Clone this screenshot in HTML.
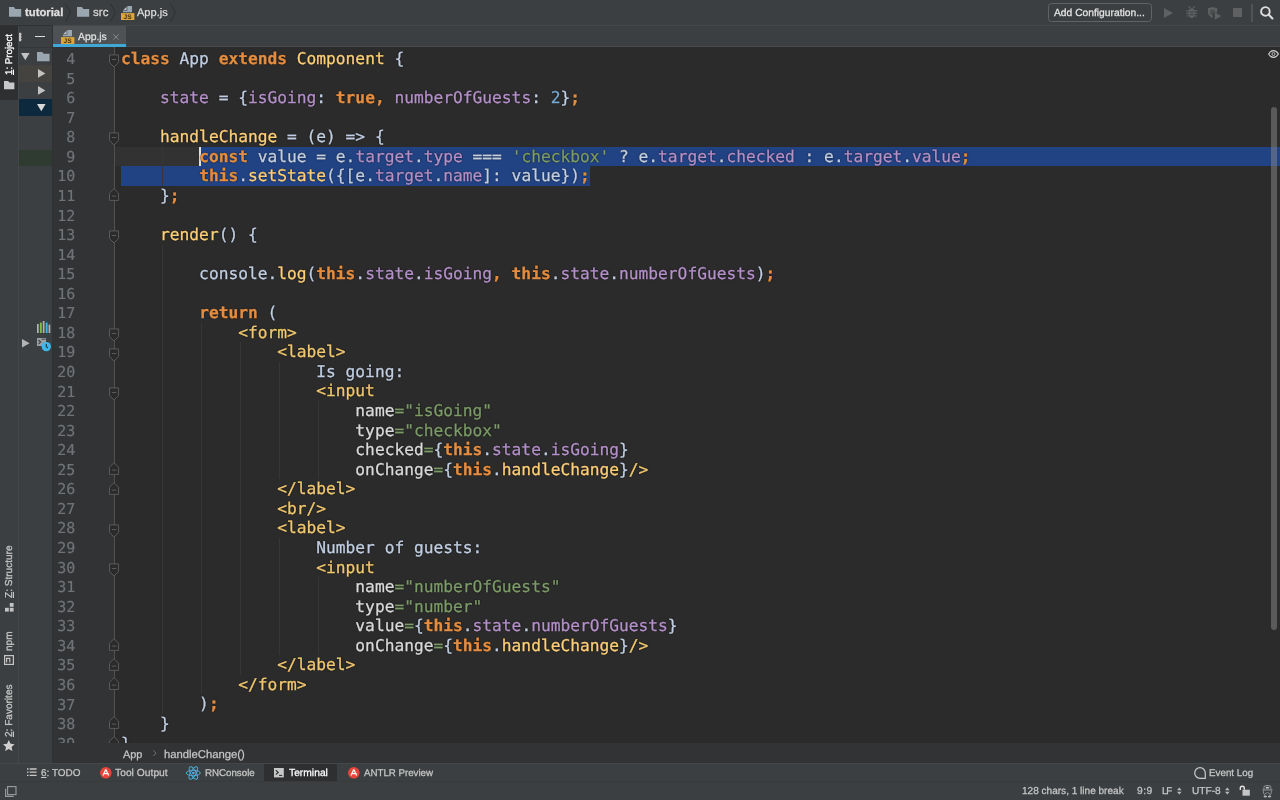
<!DOCTYPE html>
<html lang="en"><head><meta charset="utf-8"><title>App.js - tutorial</title>
<style>
*{box-sizing:border-box;margin:0;padding:0}
html,body{text-rendering:geometricPrecision;width:1280px;height:800px;overflow:hidden;background:#3c3f41;font-family:"Liberation Sans",sans-serif;color:#bbb;font-size:11px}
#app{position:relative;width:1280px;height:800px;overflow:hidden;background:#3c3f41}
.abs{position:absolute}
#editor{position:absolute;left:53px;top:47px;width:1227px;height:696px;background:#2b2b2b;overflow:hidden}
#gutter{position:absolute;left:0;top:0;width:61px;height:696px;background:#313335}
.ln{will-change:transform;-webkit-text-stroke:0.2px currentColor;position:absolute;left:0;width:22.4px;text-align:right;color:#6f7377;font:15px/19.56px "DejaVu Sans Mono","Liberation Mono",monospace;white-space:pre;height:19.56px}
.cl{text-shadow:0 0 1.5px rgba(0,0,0,.95),0 0 1px rgba(0,0,0,.5);will-change:transform;-webkit-text-stroke:0.3px currentColor;position:absolute;left:67.8px;color:#c2cfe3;font:16.235px/19.56px "DejaVu Sans Mono","Liberation Mono",monospace;white-space:pre;height:19.56px}
.k{color:#e48d40;font-weight:bold}
.p{color:#b591ca}
.f{color:#ffd07a}
.t{color:#f2c970}
.s{color:#7d9c69}
.n{color:#7aaad0}
.a{color:#dadada}
.guide{position:absolute;width:1px;background:#363636}
.ui{will-change:transform;-webkit-text-stroke:0.25px currentColor;position:absolute;white-space:nowrap;line-height:16px;height:16px}
u{text-decoration:underline;text-underline-offset:0.5px}
.vt{will-change:transform;-webkit-text-stroke:0.25px currentColor;position:absolute;white-space:nowrap;transform-origin:0 0;transform:rotate(-90deg);line-height:16px;height:16px}
svg{position:absolute;overflow:visible}
</style></head><body><div id="app">

<div id="editor">
<div id="gutter"></div>
<div class="abs" style="left:61px;top:99.75px;width:1166px;height:19.56px;background:#323232"></div>
<div class="abs" style="left:147.00px;top:99.75px;width:1100px;height:19.56px;background:#214283"></div>
<div class="abs" style="left:68.00px;top:119.31px;width:469.00px;height:19.56px;background:#214283"></div>
<div class="guide" style="left:109.0px;top:99.75px;height:39.12px"></div>
<div class="guide" style="left:109.0px;top:197.55px;height:469.44px"></div>
<div class="guide" style="left:148.0px;top:275.79px;height:371.64px"></div>
<div class="guide" style="left:187.0px;top:295.35px;height:332.52px"></div>
<div class="guide" style="left:226.0px;top:314.91px;height:117.36px"></div>
<div class="guide" style="left:226.0px;top:490.95px;height:117.36px"></div>
<div class="guide" style="left:265.0px;top:354.03px;height:78.24px"></div>
<div class="guide" style="left:265.0px;top:530.07px;height:78.24px"></div>
<div class="abs" style="left:60.9px;top:0;width:1px;height:696px;background:#515151"></div>
<div class="abs" style="left:146.2px;top:99.75px;width:1.4px;height:19.56px;background:#e0e0e0"></div>
<div class="ln" style="top:3.05px">4</div>
<div class="cl" style="top:1.95px"><span class="k">class</span> App <span class="k">extends</span> <span class="f">Component</span> {</div>
<div class="ln" style="top:22.61px">5</div>
<div class="ln" style="top:42.17px">6</div>
<div class="cl" style="top:41.07px">    <span class="p">state</span> = {<span class="p">isGoing</span>: <span class="k">true</span><span class="k">,</span> <span class="p">numberOfGuests</span>: <span class="n">2</span>}<span class="k">;</span></div>
<div class="ln" style="top:61.73px">7</div>
<div class="ln" style="top:81.29px">8</div>
<div class="cl" style="top:80.19px">    <span class="f">handleChange</span> = (e) =&gt; {</div>
<div class="ln" style="top:100.85px">9</div>
<div class="cl" style="top:99.75px">        <span class="k">const</span> value = e.<span class="p">target</span>.<span class="p">type</span> === <span class="s">'checkbox'</span> ? e.<span class="p">target</span>.<span class="p">checked</span> : e.<span class="p">target</span>.<span class="p">value</span><span class="k">;</span></div>
<div class="ln" style="top:120.41px">10</div>
<div class="cl" style="top:119.31px">        <span class="k">this</span>.<span class="f">setState</span>({[e.<span class="p">target</span>.<span class="p">name</span>]: value})<span class="k">;</span></div>
<div class="ln" style="top:139.97px">11</div>
<div class="cl" style="top:138.87px">    }<span class="k">;</span></div>
<div class="ln" style="top:159.53px">12</div>
<div class="ln" style="top:179.09px">13</div>
<div class="cl" style="top:177.99px">    <span class="f">render</span>() {</div>
<div class="ln" style="top:198.65px">14</div>
<div class="ln" style="top:218.21px">15</div>
<div class="cl" style="top:217.11px">        console.<span class="f">log</span>(<span class="k">this</span>.<span class="p">state</span>.<span class="p">isGoing</span><span class="k">,</span> <span class="k">this</span>.<span class="p">state</span>.<span class="p">numberOfGuests</span>)<span class="k">;</span></div>
<div class="ln" style="top:237.77px">16</div>
<div class="ln" style="top:257.33px">17</div>
<div class="cl" style="top:256.23px">        <span class="k">return</span> (</div>
<div class="ln" style="top:276.89px">18</div>
<div class="cl" style="top:275.79px">            <span class="t">&lt;form&gt;</span></div>
<div class="ln" style="top:296.45px">19</div>
<div class="cl" style="top:295.35px">                <span class="t">&lt;label&gt;</span></div>
<div class="ln" style="top:316.01px">20</div>
<div class="cl" style="top:314.91px">                    Is going:</div>
<div class="ln" style="top:335.57px">21</div>
<div class="cl" style="top:334.47px">                    <span class="t">&lt;input</span></div>
<div class="ln" style="top:355.13px">22</div>
<div class="cl" style="top:354.03px">                        <span class="a">name</span><span class="s">="isGoing"</span></div>
<div class="ln" style="top:374.69px">23</div>
<div class="cl" style="top:373.59px">                        <span class="a">type</span><span class="s">="checkbox"</span></div>
<div class="ln" style="top:394.25px">24</div>
<div class="cl" style="top:393.15px">                        <span class="a">checked</span><span class="s">=</span>{<span class="k">this</span>.<span class="p">state</span>.<span class="p">isGoing</span>}</div>
<div class="ln" style="top:413.81px">25</div>
<div class="cl" style="top:412.71px">                        <span class="a">onChange</span><span class="s">=</span>{<span class="k">this</span>.<span class="f">handleChange</span>}<span class="t">/&gt;</span></div>
<div class="ln" style="top:433.37px">26</div>
<div class="cl" style="top:432.27px">                <span class="t">&lt;/label&gt;</span></div>
<div class="ln" style="top:452.93px">27</div>
<div class="cl" style="top:451.83px">                <span class="t">&lt;br/&gt;</span></div>
<div class="ln" style="top:472.49px">28</div>
<div class="cl" style="top:471.39px">                <span class="t">&lt;label&gt;</span></div>
<div class="ln" style="top:492.05px">29</div>
<div class="cl" style="top:490.95px">                    Number of guests:</div>
<div class="ln" style="top:511.61px">30</div>
<div class="cl" style="top:510.51px">                    <span class="t">&lt;input</span></div>
<div class="ln" style="top:531.17px">31</div>
<div class="cl" style="top:530.07px">                        <span class="a">name</span><span class="s">="numberOfGuests"</span></div>
<div class="ln" style="top:550.73px">32</div>
<div class="cl" style="top:549.63px">                        <span class="a">type</span><span class="s">="number"</span></div>
<div class="ln" style="top:570.29px">33</div>
<div class="cl" style="top:569.19px">                        <span class="a">value</span><span class="s">=</span>{<span class="k">this</span>.<span class="p">state</span>.<span class="p">numberOfGuests</span>}</div>
<div class="ln" style="top:589.85px">34</div>
<div class="cl" style="top:588.75px">                        <span class="a">onChange</span><span class="s">=</span>{<span class="k">this</span>.<span class="f">handleChange</span>}<span class="t">/&gt;</span></div>
<div class="ln" style="top:609.41px">35</div>
<div class="cl" style="top:608.31px">                <span class="t">&lt;/label&gt;</span></div>
<div class="ln" style="top:628.97px">36</div>
<div class="cl" style="top:627.87px">            <span class="t">&lt;/form&gt;</span></div>
<div class="ln" style="top:648.53px">37</div>
<div class="cl" style="top:647.43px">        )<span class="k">;</span></div>
<div class="ln" style="top:668.09px">38</div>
<div class="cl" style="top:666.99px">    }</div>
<div class="ln" style="top:687.65px">39</div>
<div class="cl" style="top:686.55px">}</div>
<svg style="left:56px;top:2.25px" width="10" height="20" viewBox="0 0 10 20"><path d="M0.5 5.9h9.1v7.6l-4.55 4.5-4.55-4.5z" fill="#2b2b2b" stroke="#5a5a5a" stroke-width="1"/><path d="M2.8 10.5h4.5" stroke="#5a5a5a" stroke-width="1"/></svg>
<svg style="left:56px;top:80.49px" width="10" height="20" viewBox="0 0 10 20"><path d="M0.5 5.9h9.1v7.6l-4.55 4.5-4.55-4.5z" fill="#2b2b2b" stroke="#5a5a5a" stroke-width="1"/><path d="M2.8 10.5h4.5" stroke="#5a5a5a" stroke-width="1"/></svg>
<svg style="left:56px;top:178.29px" width="10" height="20" viewBox="0 0 10 20"><path d="M0.5 5.9h9.1v7.6l-4.55 4.5-4.55-4.5z" fill="#2b2b2b" stroke="#5a5a5a" stroke-width="1"/><path d="M2.8 10.5h4.5" stroke="#5a5a5a" stroke-width="1"/></svg>
<svg style="left:56px;top:276.09px" width="10" height="20" viewBox="0 0 10 20"><path d="M0.5 5.9h9.1v7.6l-4.55 4.5-4.55-4.5z" fill="#2b2b2b" stroke="#5a5a5a" stroke-width="1"/><path d="M2.8 10.5h4.5" stroke="#5a5a5a" stroke-width="1"/></svg>
<svg style="left:56px;top:295.65px" width="10" height="20" viewBox="0 0 10 20"><path d="M0.5 5.9h9.1v7.6l-4.55 4.5-4.55-4.5z" fill="#2b2b2b" stroke="#5a5a5a" stroke-width="1"/><path d="M2.8 10.5h4.5" stroke="#5a5a5a" stroke-width="1"/></svg>
<svg style="left:56px;top:334.77px" width="10" height="20" viewBox="0 0 10 20"><path d="M0.5 5.9h9.1v7.6l-4.55 4.5-4.55-4.5z" fill="#2b2b2b" stroke="#5a5a5a" stroke-width="1"/><path d="M2.8 10.5h4.5" stroke="#5a5a5a" stroke-width="1"/></svg>
<svg style="left:56px;top:471.69px" width="10" height="20" viewBox="0 0 10 20"><path d="M0.5 5.9h9.1v7.6l-4.55 4.5-4.55-4.5z" fill="#2b2b2b" stroke="#5a5a5a" stroke-width="1"/><path d="M2.8 10.5h4.5" stroke="#5a5a5a" stroke-width="1"/></svg>
<svg style="left:56px;top:510.81px" width="10" height="20" viewBox="0 0 10 20"><path d="M0.5 5.9h9.1v7.6l-4.55 4.5-4.55-4.5z" fill="#2b2b2b" stroke="#5a5a5a" stroke-width="1"/><path d="M2.8 10.5h4.5" stroke="#5a5a5a" stroke-width="1"/></svg>
<svg style="left:56px;top:139.17px" width="10" height="20" viewBox="0 0 10 20"><path d="M0.5 14.4h9.1v-7.2l-4.55-4.5-4.55 4.5z" fill="#2b2b2b" stroke="#5a5a5a" stroke-width="1"/><path d="M2.8 10.1h4.5" stroke="#5a5a5a" stroke-width="1"/></svg>
<svg style="left:56px;top:413.01px" width="10" height="20" viewBox="0 0 10 20"><path d="M0.5 14.4h9.1v-7.2l-4.55-4.5-4.55 4.5z" fill="#2b2b2b" stroke="#5a5a5a" stroke-width="1"/><path d="M2.8 10.1h4.5" stroke="#5a5a5a" stroke-width="1"/></svg>
<svg style="left:56px;top:432.57px" width="10" height="20" viewBox="0 0 10 20"><path d="M0.5 14.4h9.1v-7.2l-4.55-4.5-4.55 4.5z" fill="#2b2b2b" stroke="#5a5a5a" stroke-width="1"/><path d="M2.8 10.1h4.5" stroke="#5a5a5a" stroke-width="1"/></svg>
<svg style="left:56px;top:589.05px" width="10" height="20" viewBox="0 0 10 20"><path d="M0.5 14.4h9.1v-7.2l-4.55-4.5-4.55 4.5z" fill="#2b2b2b" stroke="#5a5a5a" stroke-width="1"/><path d="M2.8 10.1h4.5" stroke="#5a5a5a" stroke-width="1"/></svg>
<svg style="left:56px;top:608.61px" width="10" height="20" viewBox="0 0 10 20"><path d="M0.5 14.4h9.1v-7.2l-4.55-4.5-4.55 4.5z" fill="#2b2b2b" stroke="#5a5a5a" stroke-width="1"/><path d="M2.8 10.1h4.5" stroke="#5a5a5a" stroke-width="1"/></svg>
<svg style="left:56px;top:628.17px" width="10" height="20" viewBox="0 0 10 20"><path d="M0.5 14.4h9.1v-7.2l-4.55-4.5-4.55 4.5z" fill="#2b2b2b" stroke="#5a5a5a" stroke-width="1"/><path d="M2.8 10.1h4.5" stroke="#5a5a5a" stroke-width="1"/></svg>
<svg style="left:56px;top:667.29px" width="10" height="20" viewBox="0 0 10 20"><path d="M0.5 14.4h9.1v-7.2l-4.55-4.5-4.55 4.5z" fill="#2b2b2b" stroke="#5a5a5a" stroke-width="1"/><path d="M2.8 10.1h4.5" stroke="#5a5a5a" stroke-width="1"/></svg>
<svg style="left:56px;top:686.85px" width="10" height="20" viewBox="0 0 10 20"><path d="M0.5 14.4h9.1v-7.2l-4.55-4.5-4.55 4.5z" fill="#2b2b2b" stroke="#5a5a5a" stroke-width="1"/><path d="M2.8 10.1h4.5" stroke="#5a5a5a" stroke-width="1"/></svg>
<div class="abs" style="left:1217.8px;top:60px;width:6.5px;height:523px;border-radius:3.3px;background:rgba(139,139,139,.49)"></div>
<svg style="left:1215.3px;top:2.6px" width="11" height="8" viewBox="0 0 11 8"><path d="M0.6 4C2 1.6 3.6 0.6 5.5 0.6S9 1.6 10.4 4C9 6.4 7.4 7.4 5.5 7.4S2 6.4 0.6 4z" fill="none" stroke="#cfcfcf" stroke-width="1.15"/><circle cx="5.5" cy="4" r="1.5" fill="none" stroke="#bdbdbd" stroke-width="1"/></svg>
</div>
<div class="abs" style="left:0px;top:0px;width:1280px;height:25px;background:#3c3f41"></div>
<div class="abs" style="left:0px;top:25px;width:53px;height:1px;background:#303234"></div>
<div class="abs" style="left:53px;top:25px;width:1227px;height:1px;background:#464849"></div>
<div class="abs" style="left:53px;top:26px;width:1227px;height:20px;background:#3c3f41"></div>
<div class="abs" style="left:53px;top:46px;width:1227px;height:1px;background:#4a4b4c"></div>
<div class="abs" style="left:53px;top:26px;width:73.2px;height:19px;background:#4e5254"></div>
<div class="abs" style="left:53px;top:44.2px;width:73.2px;height:2.8px;background:#40a8d4"></div>
<div class="abs" style="left:0px;top:26px;width:18px;height:737px;background:#3c3f41"></div>
<div class="abs" style="left:0px;top:26px;width:18px;height:73.5px;background:#2d2f30"></div>
<div class="abs" style="left:18px;top:26px;width:1px;height:737px;background:#444648"></div>
<div class="abs" style="left:19px;top:26px;width:33.6px;height:737px;background:#3c3f41"></div>
<div class="abs" style="left:19px;top:46.6px;width:33.4px;height:0.9px;background:#343638"></div>
<div class="abs" style="left:19px;top:65px;width:34px;height:17px;background:#45433f"></div>
<div class="abs" style="left:19px;top:99px;width:34px;height:16.7px;background:#0d293e"></div>
<div class="abs" style="left:19px;top:149.5px;width:34px;height:16.5px;background:#2f3b30"></div>
<div class="abs" style="left:52.4px;top:26px;width:0.8px;height:737px;background:#2f3133"></div>
<div class="abs" style="left:53px;top:743px;width:1227px;height:20px;background:#313335"></div>
<div class="abs" style="left:0px;top:763px;width:1280px;height:19px;background:#3c3f41"></div>
<div class="abs" style="left:0px;top:763px;width:1280px;height:1px;background:#444648"></div>
<div class="abs" style="left:264.3px;top:764px;width:73px;height:17.5px;background:#2d2f30"></div>
<div class="abs" style="left:0px;top:782px;width:1280px;height:18px;background:#3c3f41"></div>
<div class="abs" style="left:0px;top:781px;width:1280px;height:1px;background:#393a3b"></div>
<svg style="left:9px;top:7px" width="12.2" height="9.8" viewBox="0 0 12.2 9.8"><path d="M0 0h5l1.3 2H12.2v7.8H0z" fill="#9aa7b0"/></svg>
<div class="ui" style="left:25.00px;top:5.10px;font-size:11.3px;letter-spacing:0.001px;color:#e0e0e0;font-weight:bold">tutorial</div>
<svg style="left:65.3px;top:3px" width="6" height="19" viewBox="0 0 6 19"><path d="M0.5 0.5L5.5 9.5L0.5 18.5" fill="none" stroke="#2e3032" stroke-width="1"/></svg>
<svg style="left:76.5px;top:7px" width="12.2" height="9.8" viewBox="0 0 12.2 9.8"><path d="M0 0h5l1.3 2H12.2v7.8H0z" fill="#9aa7b0"/></svg>
<div class="ui" style="left:92.60px;top:5.10px;font-size:11.48px;letter-spacing:0.048px;color:#ddd">src</div>
<svg style="left:109.7px;top:3px" width="6" height="19" viewBox="0 0 6 19"><path d="M0.5 0.5L5.5 9.5L0.5 18.5" fill="none" stroke="#2e3032" stroke-width="1"/></svg>
<svg style="left:120.7px;top:6px" width="13.4" height="14" viewBox="0 0 13.4 14"><path d="M6.3 0H11v6.3H1.9V4.8h4.4z" fill="#9aa7b0"/><path d="M5.6 0.7v3.5H2.1z" fill="#b4bec6"/><rect x="0" y="7.1" width="13.4" height="6.9" fill="#dba53f"/><text x="2.6" y="12.9" font-family="Liberation Sans,sans-serif" font-size="6.6" font-weight="bold" fill="#3a2c10">JS</text></svg>
<div class="ui" style="left:137.30px;top:5.10px;font-size:11.05px;letter-spacing:-0.002px;color:#ddd">App.js</div>
<svg style="left:170px;top:3px" width="6" height="19" viewBox="0 0 6 19"><path d="M0.5 0.5L5.5 9.5L0.5 18.5" fill="none" stroke="#2e3032" stroke-width="1"/></svg>
<div class="abs" style="left:1048px;top:2.5px;width:104px;height:19.5px;border:1px solid #606263;border-radius:3.5px"></div>
<div class="ui" style="left:1054.30px;top:5.50px;font-size:10.28px;letter-spacing:0.002px;color:#e4e4e4">Add Configuration...</div>
<svg style="left:1164.4px;top:7.8px" width="9" height="10" viewBox="0 0 9 10"><path d="M0 0L9 5L0 10z" fill="#5e6061"/></svg>
<svg style="left:1185.6px;top:6.3px" width="11.4" height="12.2" viewBox="0 0 11.4 12.2"><path d="M2.6 0.3l1.8 2M8.8 0.3L7 2.3" stroke="#5e6061" stroke-width="1.1" fill="none"/><ellipse cx="5.7" cy="7.2" rx="3.5" ry="4.9" fill="#5e6061"/><path d="M0.2 4.6h2.2M9 4.6h2.2M0 7.3h2.4M9 7.3h2.4M0.4 10h2.2M8.8 10h2.2" stroke="#5e6061" stroke-width="1.1" fill="none"/><path d="M3.6 6.1h4.2M3.6 8.7h4.2" stroke="#3c3f41" stroke-width="1"/></svg>
<svg style="left:1208px;top:6.5px" width="14" height="13" viewBox="0 0 14 13"><path d="M0 1.2L4.6 0l4.6 1.2v4.2L4.6 6v5.2C1.7 10 0 7.6 0 5z" fill="#5e6061"/><path d="M2.2 2.8h4.6v5H2.2z" fill="#3c3f41" opacity=".55"/><path d="M6.8 5.5l6.6 3.6-6.6 3.6z" fill="#5e6061"/></svg>
<div class="abs" style="left:1233.3px;top:8.2px;width:8.8px;height:8.8px;background:#5e6061"></div>
<div class="abs" style="left:1251.4px;top:3.6px;width:1.4px;height:18px;background:#505355"></div>
<svg style="left:1259.6px;top:6.2px" width="14" height="14" viewBox="0 0 14 14"><circle cx="5.4" cy="5.4" r="4.3" fill="none" stroke="#dedede" stroke-width="1.9"/><path d="M8.6 8.6l3.8 3.8" stroke="#dedede" stroke-width="2.1" stroke-linecap="round"/></svg>
<svg style="left:61px;top:30px" width="13.4" height="14" viewBox="0 0 13.4 14"><path d="M6.3 0H11v6.3H1.9V4.8h4.4z" fill="#9aa7b0"/><path d="M5.6 0.7v3.5H2.1z" fill="#b4bec6"/><rect x="0" y="7.1" width="13.4" height="6.9" fill="#dba53f"/><text x="2.6" y="12.9" font-family="Liberation Sans,sans-serif" font-size="6.6" font-weight="bold" fill="#3a2c10">JS</text></svg>
<div class="ui" style="left:77.90px;top:29.60px;font-size:10.36px;letter-spacing:0.001px;color:#e0e0e0">App.js</div>
<svg style="left:113.2px;top:33.9px" width="6" height="6" viewBox="0 0 6 6"><path d="M0.3 0.3l5.4 5.4M5.7 0.3l-5.4 5.4" stroke="#878c8e" stroke-width="0.9" fill="none"/></svg>
<svg style="left:19px;top:31.5px" width="4" height="10" viewBox="0 0 4 10"><path d="M0 0.8h1.8l1 1.4-1 1.4 1 1.4-1 1.4 1 1.4-1 1.4H0z" fill="#c4c4c4"/></svg>
<div class="abs" style="left:34.8px;top:35.6px;width:10.5px;height:1.5px;background:#dcdcdc"></div>
<svg style="left:21px;top:53px" width="8.6" height="7.2" viewBox="0 0 8.6 7.2"><path d="M0 0h8.6L4.3 7.2z" fill="#c2c2c2"/></svg>
<svg style="left:37.2px;top:52px" width="12.6" height="9.2" viewBox="0 0 12.6 9.2"><path d="M0 0h5.2l1.3 1.8h6.1v7.4H0z" fill="#9aa7b0"/></svg>
<svg style="left:38px;top:69.2px" width="7.4" height="8.8" viewBox="0 0 7.4 8.8"><path d="M0 0L7.4 4.4L0 8.8z" fill="#c2c2c2"/></svg>
<svg style="left:38px;top:86px" width="7.4" height="8.8" viewBox="0 0 7.4 8.8"><path d="M0 0L7.4 4.4L0 8.8z" fill="#c2c2c2"/></svg>
<svg style="left:37px;top:103.6px" width="8.6" height="7.2" viewBox="0 0 8.6 7.2"><path d="M0 0h8.6L4.3 7.2z" fill="#d8d8d8"/></svg>
<svg style="left:37px;top:320.6px" width="13.4" height="12.2" viewBox="0 0 13.4 12.2"><rect x="0" y="3" width="1.7" height="9" fill="#aeb4b8"/><rect x="2.9" y="1.6" width="1.9" height="10.4" fill="#7ec04a"/><rect x="5.8" y="0" width="1.7" height="12" fill="#aeb4b8"/><rect x="8.7" y="1.6" width="1.9" height="10.4" fill="#43b4e6"/><rect x="11.6" y="3.6" width="1.7" height="8.4" fill="#aeb4b8"/></svg>
<svg style="left:22px;top:339.4px" width="7.6" height="8.6" viewBox="0 0 7.6 8.6"><path d="M0 0L7.6 4.3L0 8.6z" fill="#b4b4b4"/></svg>
<svg style="left:37px;top:338px" width="14" height="14" viewBox="0 0 14 14"><rect x="0" y="0" width="9" height="8" fill="#9aa0a4"/><path d="M1.5 2l2.2 2-2.2 2" stroke="#3c3f41" stroke-width="1.1" fill="none"/><path d="M4.5 1.2h4" stroke="#3c3f41" stroke-width=".9"/><circle cx="9.3" cy="8.6" r="4.7" fill="#3fb6ea"/><path d="M9.3 6v2.8l1.6 1.2" stroke="#1d3b4a" stroke-width="1.1" fill="none"/></svg>
<div class="vt" style="left:2.00px;top:75.00px;font-size:9.75px;letter-spacing:-0.021px;color:#ffffff"><u>1</u>: Project</div>
<svg style="left:4px;top:81px" width="10.4" height="8.2" viewBox="0 0 10.4 8.2"><path d="M0 0h4.2l1.1 1.6h5.1v6.6H0z" fill="#c9c9c9"/></svg>
<div class="vt" style="left:2.20px;top:597.50px;font-size:10.05px;letter-spacing:0.000px;color:#c6c6c6"><u>Z</u>: Structure</div>
<svg style="left:5px;top:602.5px" width="8.6" height="8.6" viewBox="0 0 8.6 8.6"><rect x="4.8" y="0" width="3.8" height="3.8" fill="#c4c4c4"/><rect x="0" y="4.8" width="3.8" height="3.8" fill="#c4c4c4"/><rect x="4.8" y="4.8" width="3.8" height="3.8" fill="#c4c4c4"/></svg>
<div class="vt" style="left:2.20px;top:650.50px;font-size:10.02px;letter-spacing:0.004px;color:#c6c6c6">npm</div>
<svg style="left:4px;top:655px" width="10" height="10" viewBox="0 0 10 10"><rect x="0.6" y="0.6" width="8.8" height="8.8" fill="none" stroke="#c4c4c4" stroke-width="1.2"/><path d="M2.6 7.6V3.4h3.2v4.2" fill="none" stroke="#c4c4c4" stroke-width="1.2"/></svg>
<div class="vt" style="left:2.20px;top:737.00px;font-size:10.05px;letter-spacing:-0.000px;color:#c6c6c6"><u>2</u>: Favorites</div>
<svg style="left:3.4px;top:740.4px" width="11.6" height="11" viewBox="0 0 11.6 11"><path d="M5.8 0l1.75 3.7 4.05 0.5-3 2.8 0.8 4-3.6-2-3.6 2 0.8-4-3-2.8 4.05-0.5z" fill="#cfcfcf"/></svg>
<div class="ui" style="left:122.80px;top:746.50px;font-size:10.9px;letter-spacing:0.002px;color:#c6c6c6">App</div>
<svg style="left:153px;top:750.2px" width="3.5" height="6.4" viewBox="0 0 3.5 6.4"><path d="M0.4 0.4l2.6 2.8-2.6 2.8" fill="none" stroke="#7b7b7b" stroke-width="0.9"/></svg>
<div class="ui" style="left:163.50px;top:746.50px;font-size:11.28px;letter-spacing:-0.000px;color:#c6c6c6">handleChange()</div>
<svg style="left:27.3px;top:768.3px" width="9.6" height="8.4" viewBox="0 0 9.6 8.4"><path d="M2.7 1h6.9M2.7 4.2h6.9M2.7 7.4h6.9" stroke="#c8c8c8" stroke-width="1.3"/><path d="M0 1h1.5M0 4.2h1.5M0 7.4h1.5" stroke="#c8c8c8" stroke-width="1.3"/></svg>
<div class="ui" style="left:41.00px;top:765.50px;font-size:9.96px;letter-spacing:0.002px;color:#c6c6c6"><u>6</u>: TODO</div>
<svg style="left:99.7px;top:766.9px" width="11.6" height="11.6" viewBox="0 0 11.6 11.6"><circle cx="5.8" cy="5.8" r="5.8" fill="#e8443a"/><path d="M3 8.6L5.8 2.6l2.8 6M4.2 6.6h4.4" stroke="#fff" stroke-width="1.2" fill="none" stroke-linejoin="round"/></svg>
<div class="ui" style="left:115.30px;top:765.50px;font-size:10.25px;letter-spacing:0.028px;color:#c6c6c6">Tool Output</div>
<svg style="left:186.4px;top:765.6px" width="14.6" height="14" viewBox="0 0 14.6 14"><g fill="none" stroke="#4db4e0" stroke-width="0.9"><ellipse cx="7.3" cy="7" rx="7" ry="2.7"/><ellipse cx="7.3" cy="7" rx="7" ry="2.7" transform="rotate(60 7.3 7)"/><ellipse cx="7.3" cy="7" rx="7" ry="2.7" transform="rotate(120 7.3 7)"/></g><circle cx="7.3" cy="7" r="1.3" fill="#4db4e0"/></svg>
<div class="ui" style="left:204.50px;top:765.50px;font-size:9.75px;letter-spacing:-0.020px;color:#c6c6c6">RNConsole</div>
<svg style="left:274.4px;top:767.8px" width="9.8" height="9.4" viewBox="0 0 9.8 9.4"><rect x="0" y="0" width="9.8" height="9.4" fill="#c8c8c8"/><path d="M1.8 2.2l2.4 2.2-2.4 2.2" stroke="#2d2f30" stroke-width="1.2" fill="none"/><path d="M5 7.4h3.2" stroke="#2d2f30" stroke-width="1.1"/></svg>
<div class="ui" style="left:289.40px;top:765.50px;font-size:10.25px;letter-spacing:0.024px;color:#fff">Terminal</div>
<svg style="left:348.2px;top:766.9px" width="11.6" height="11.6" viewBox="0 0 11.6 11.6"><circle cx="5.8" cy="5.8" r="5.8" fill="#e8443a"/><path d="M3 8.6L5.8 2.6l2.8 6M4.2 6.6h4.4" stroke="#fff" stroke-width="1.2" fill="none" stroke-linejoin="round"/></svg>
<div class="ui" style="left:364.00px;top:765.50px;font-size:9.75px;letter-spacing:-0.029px;color:#c6c6c6">ANTLR Preview</div>
<svg style="left:1193.6px;top:767px" width="12" height="12" viewBox="0 0 12 12"><path d="M6 0.7a5.3 5.3 0 0 1 5.3 5.3v5.3H6A5.3 5.3 0 0 1 6 0.7z" fill="none" stroke="#cacaca" stroke-width="1.2"/></svg>
<div class="ui" style="left:1209.40px;top:765.70px;font-size:9.81px;letter-spacing:0.003px;color:#c8c8c8">Event Log</div>
<svg style="left:4.8px;top:785.8px" width="11.6" height="11" viewBox="0 0 11.6 11"><rect x="2.6" y="0.6" width="8.4" height="8" fill="none" stroke="#9a9d9f" stroke-width="1.1"/><path d="M0.6 2.8v7.6h8" fill="none" stroke="#9a9d9f" stroke-width="1.1"/></svg>
<div class="ui" style="left:1021.60px;top:784.40px;font-size:10.06px;letter-spacing:0.001px;color:#c6c6c6">128 chars, 1 line break</div>
<div class="ui" style="left:1136.70px;top:784.40px;font-size:10.25px;letter-spacing:0.425px;color:#c6c6c6">9:9</div>
<div class="ui" style="left:1162.00px;top:784.40px;font-size:9.75px;letter-spacing:-1.079px;color:#c6c6c6">LF</div>
<svg style="left:1176.5px;top:787.4px" width="4.6" height="8" viewBox="0 0 4.6 8"><path d="M0 3.2L2.3 0.4l2.3 2.8zM0 4.8l2.3 2.8 2.3-2.8z" fill="#bbb"/></svg>
<div class="ui" style="left:1191.50px;top:784.40px;font-size:10.13px;letter-spacing:0.000px;color:#c6c6c6">UTF-8</div>
<svg style="left:1224.6px;top:787.4px" width="4.6" height="8" viewBox="0 0 4.6 8"><path d="M0 3.2L2.3 0.4l2.3 2.8zM0 4.8l2.3 2.8 2.3-2.8z" fill="#bbb"/></svg>
<svg style="left:1239.3px;top:785px" width="11.2" height="11.2" viewBox="0 0 11.2 11.2"><path d="M1.3 4.9V3.3A2 2 0 0 1 5.3 3.3V4.8" fill="none" stroke="#e6e6e6" stroke-width="1.35"/><rect x="3.5" y="4.7" width="7.3" height="6" fill="#c6c6c6"/></svg>
<svg style="left:1262.2px;top:784.8px" width="10.8" height="13" viewBox="0 0 10.8 13"><path d="M1.9 4.8V2.4Q1.9 0.6 3.7 0.6H7.1Q8.9 0.6 8.9 2.4V4.8" fill="#4a4d4f" stroke="#8e9092" stroke-width="1"/><rect x="3.9" y="1.9" width="3" height="1.5" rx="0.6" fill="#d2d2d2"/><path d="M0.3 5h10.2" stroke="#8e9092" stroke-width="1.1"/><path d="M1.4 5.6Q1 8.6 3 10.4M9.4 5.6Q9.8 8.6 7.8 10.4" fill="none" stroke="#8e9092" stroke-width="1"/><path d="M2.8 9l2.6-1.6L8 9" fill="none" stroke="#8e9092" stroke-width="1"/><circle cx="5.4" cy="6.6" r="0.6" fill="#2f3133"/><ellipse cx="3.3" cy="11.6" rx="1.7" ry="1" fill="#b4b4b4"/><ellipse cx="7.5" cy="11.6" rx="1.7" ry="1" fill="#b4b4b4"/></svg>
</div></body></html>
